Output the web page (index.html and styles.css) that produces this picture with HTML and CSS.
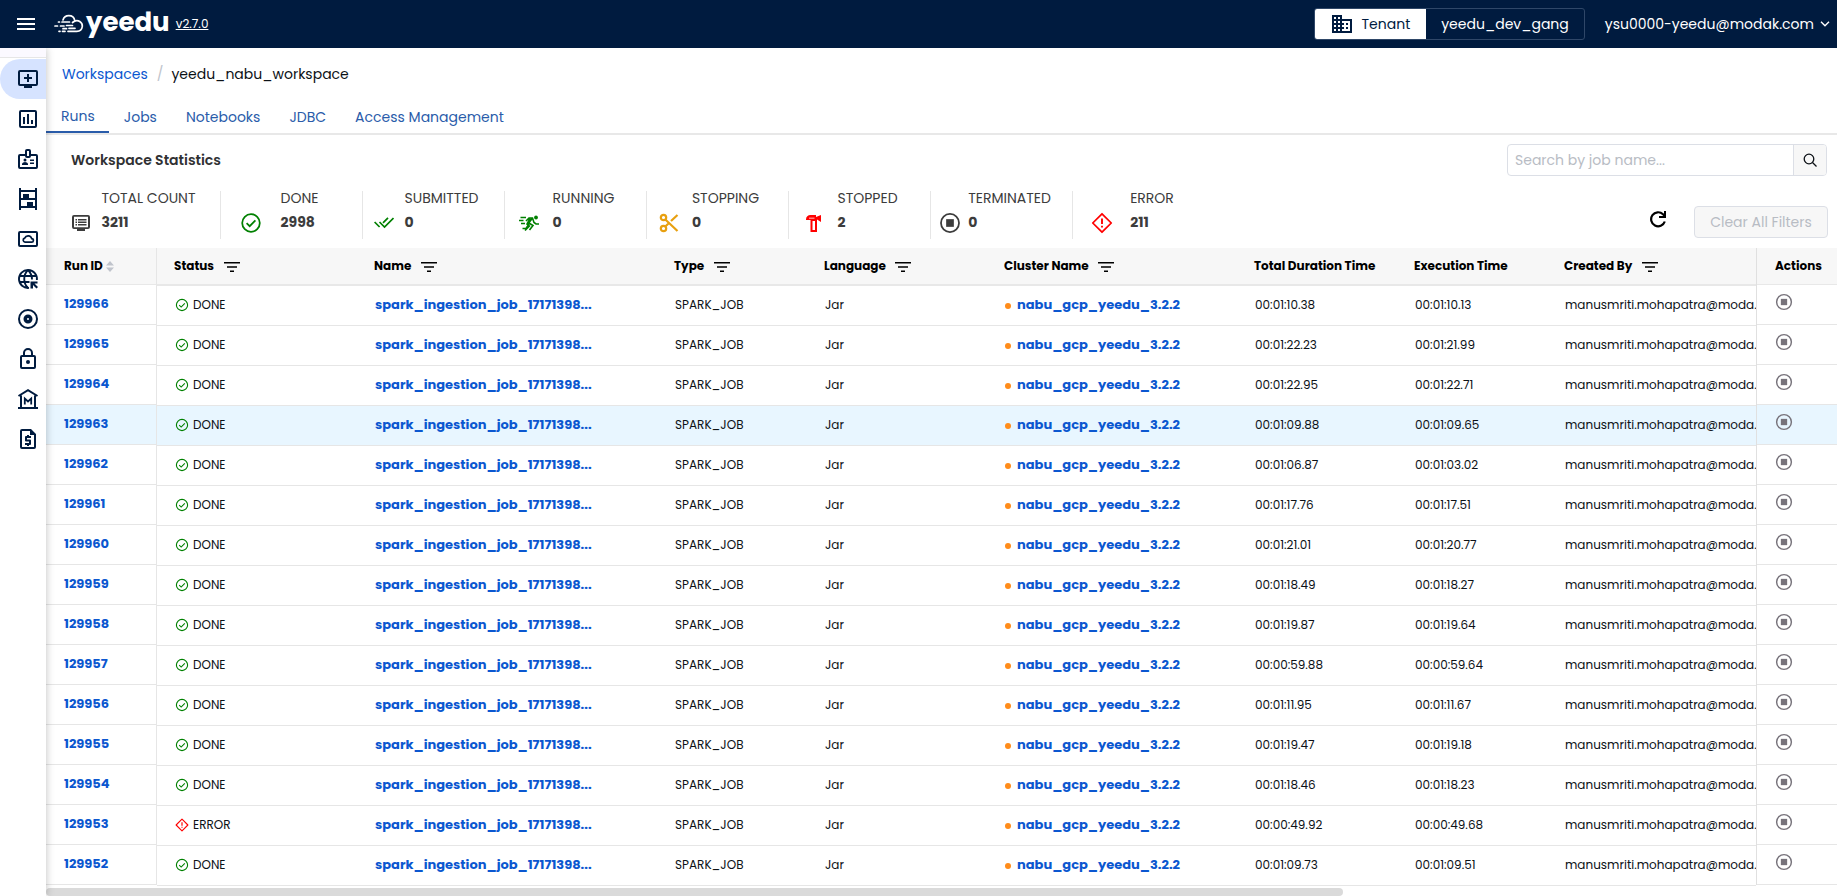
FILE: index.html
```html
<!DOCTYPE html>
<html lang="en">
  <head>
    <meta charset="UTF-8" />
    <meta name="viewport" content="width=device-width, initial-scale=1.0" />
    <title>Yeedu</title>
    <link rel="stylesheet" href="styles.css">
  </head>
  <body>
    <!-- shared icons -->
    <svg class="sprite" aria-hidden="true">
      <symbol id="i-filter" viewBox="0 0 16 12"><path d="M0 1h16v1.600H0zM3 5.200h10v1.600H3zM6 9.400h4V11H6z" /></symbol>
      <symbol id="i-check" viewBox="0 0 20 20"><circle cx="10" cy="10" r="8" fill="none" stroke="currentColor" stroke-width="1.6" /><path d="M6 10.2l2.8 2.7 5.2-5.3" fill="none" stroke="currentColor" stroke-width="1.6" /></symbol>
      <symbol id="i-error" viewBox="0 0 20 20"><path d="M10 1.6L18.4 10 10 18.4 1.6 10z" fill="none" stroke="currentColor" stroke-width="1.6" stroke-linejoin="round" /><path d="M10 6v5M10 12.4v1.7" fill="none" stroke="currentColor" stroke-width="1.7" /></symbol>
      <symbol id="i-stop" viewBox="0 0 20 20"><circle cx="10" cy="10" r="8.2" fill="none" stroke="currentColor" stroke-width="1.6" /><path d="M6.5 6.5h7v7h-7z" /></symbol>
    </svg>

    <header class="topbar">
      <button class="menu-btn" aria-label="Menu">
        <svg width="18" height="12" viewBox="0 0 18 12"><path d="M0 0h18v2H0zM0 5h18v2H0zM0 10h18v2H0z" /></svg>
      </button>
      <a class="logo" href="#">
        <svg width="31" height="20" viewBox="0 0 31 20" fill="none" stroke="currentColor" stroke-width="1.7" stroke-linecap="round">
          <path d="M9 6C9.800 3.300 12 1.700 14.800 1.700c3.200 0 5.500 2 6 5M18.500 8.500c2.500-2.200 5.300-2.300 7.300-1 1.800 1.200 2.700 3 2.500 5-.4 3-2.500 4.800-5.500 4.800H14" />
          <path d="M4.500 8h1M8 8h7.500M1 12h2.500M6.500 12h3.500M12.500 11.500h6M9 14.700h3.500M15 14.300h6M5 17.300h1M8.500 17.300h2.500" />
        </svg>
        <span>yeedu</span>
      </a>
      <a class="version" href="#">v2.7.0</a>
      <div class="tenant">
        <button class="tenant-label">
          <svg width="22" height="20" viewBox="0 0 22 20"><path fill-rule="evenodd" d="M1 1h10v4h10v14H1zM3 3v2h2V3zm4 0v2h2V3zM3 7v2h2V7zm4 0v2h2V7zm-4 4v2h2v-2zm4 0v2h2v-2zm-4 4v2h2v-2zm4 0v2h2v-2zm4-8v2h2v2h-2v2h2v2h-2v2h8V7zm4 2h2v2h-2zm0 4h2v2h-2z" /></svg>
          Tenant
        </button>
        <button class="tenant-name">yeedu_dev_gang</button>
      </div>
      <button class="user">
        ysu0000-yeedu@modak.com
        <svg width="10" height="6" viewBox="0 0 10 6"><path d="M1 .8l4 4 4-4" fill="none" stroke="currentColor" stroke-width="1.4" /></svg>
      </button>
    </header>

    <div class="layout">
      <nav class="sidebar">
        <a class="active" href="#" aria-label="Workspaces"><svg viewBox="0 0 24 24"><path fill-rule="evenodd" d="M4 3h16a2 2 0 0 1 2 2v12a2 2 0 0 1-2 2h-4v2H8v-2H4a2 2 0 0 1-2-2V5a2 2 0 0 1 2-2zm0 2v12h16V5zm7 2h2v3h3v2h-3v3h-2v-3H8v-2h3z" /></svg></a>
        <a href="#" aria-label="Dashboard"><svg viewBox="0 0 24 24"><path fill-rule="evenodd" d="M5 3h14a2 2 0 0 1 2 2v14a2 2 0 0 1-2 2H5a2 2 0 0 1-2-2V5a2 2 0 0 1 2-2zm0 2v14h14V5zm2 5h2v7H7zm4-3h2v10h-2zm4 6h2v4h-2z" /></svg></a>
        <a href="#" aria-label="Users"><svg viewBox="0 0 24 24"><path fill-rule="evenodd" d="M11 2h2a2 2 0 0 1 2 2v3h5a2 2 0 0 1 2 2v11a2 2 0 0 1-2 2H4a2 2 0 0 1-2-2V9a2 2 0 0 1 2-2h5V4a2 2 0 0 1 2-2zm0 2v5h2V4zM4 9v11h16V9h-5a2 2 0 0 1-2 2h-2a2 2 0 0 1-2-2zm2 9v-1c0-1.300 2-2 3-2s3 .7 3 2v1z" /><circle cx="9" cy="13" r="1.500" /><path d="M14 12.500h4V14h-4zM14 15.500h4V17h-4z" /></svg></a>
        <a href="#" aria-label="Clusters"><svg viewBox="0 0 24 24"><path fill-rule="evenodd" d="M3 1h2v2h14V1h2v22h-2v-2H5v2H3zm2 4v6h2V7h6v4h6V5zm0 8v6h6v-4h6v4h2v-6z" /></svg></a>
        <a href="#" aria-label="Cloud environments"><svg viewBox="0 0 24 24"><path fill-rule="evenodd" d="M4 4h16a2 2 0 0 1 2 2v12a2 2 0 0 1-2 2H4a2 2 0 0 1-2-2V6a2 2 0 0 1 2-2zm0 2v12h16V6z" /><path d="M9 15.200h6.500a1.800 1.800 0 0 0 .2-3.600 3.700 3.700 0 0 0-7-.5A2.100 2.100 0 0 0 9 15.200z" fill="none" stroke="currentColor" stroke-width="1.700" /></svg></a>
        <a href="#" aria-label="Networks"><svg viewBox="0 0 24 24"><path fill="none" stroke="currentColor" stroke-width="1.900" d="M13 20.900A9 9 0 1 1 20.900 13M12 3c-5 5-5 13 0 18M12 3c3 3 4 6 4 9.500M3.500 9h17M3.500 15h10" /><path d="M14.500 14.500h7v2h-3l3.500 3.500-1.500 1.500L17 18v3.500h-2.500z" /></svg></a>
        <a href="#" aria-label="Disks"><svg viewBox="0 0 24 24"><circle cx="12" cy="12" r="9" fill="none" stroke="currentColor" stroke-width="2" /><path fill-rule="evenodd" d="M12 7.500a4.500 4.500 0 1 1 0 9 4.500 4.500 0 0 1 0-9zm0 3.500a1 1 0 1 0 0 2 1 1 0 0 0 0-2z" /></svg></a>
        <a href="#" aria-label="Credentials"><svg viewBox="0 0 24 24"><path fill-rule="evenodd" d="M7 8V6a5 5 0 0 1 10 0v2h1a2 2 0 0 1 2 2v10a2 2 0 0 1-2 2H6a2 2 0 0 1-2-2V10a2 2 0 0 1 2-2zm2 0h6V6a3 3 0 0 0-6 0zm-3 2v10h12V10z" /><circle cx="12" cy="15" r="2" /></svg></a>
        <a href="#" aria-label="Metastore"><svg viewBox="0 0 24 24"><path d="M2 20h20v2H2z" /><path d="M2.500 9L12 3.200 21.500 9M5 8.500V21M19 8.500V21" fill="none" stroke="currentColor" stroke-width="2" /><path d="M8.800 17.500v-6l3.200 3 3.200-3v6" fill="none" stroke="currentColor" stroke-width="1.800" /></svg></a>
        <a href="#" aria-label="Billing"><svg viewBox="0 0 24 24"><path fill-rule="evenodd" d="M6 2h9l5 5v13a2 2 0 0 1-2 2H6a2 2 0 0 1-2-2V4a2 2 0 0 1 2-2zm0 2v16h12V8h-4V4zm5 4h2v1h2v2h-4v1.500h3a1 1 0 0 1 1 1V17a1 1 0 0 1-1 1h-1v1h-2v-1H9v-2h4v-1.500h-3a1 1 0 0 1-1-1V10a1 1 0 0 1 1-1h1z" /></svg></a>
      </nav>

      <main class="content">
        <nav class="breadcrumb">
          <a href="#">Workspaces</a>
          <span class="slash">/</span>
          <span>yeedu_nabu_workspace</span>
        </nav>
        <nav class="tabs">
          <a class="active" href="#">Runs</a>
          <a href="#">Jobs</a>
          <a href="#">Notebooks</a>
          <a href="#">JDBC</a>
          <a href="#">Access Management</a>
        </nav>

        <div class="title-row">
          <h1>Workspace Statistics</h1>
          <form class="search">
            <input type="text" placeholder="Search by job name..." aria-label="Search by job name">
            <button type="button" aria-label="Search">
              <svg width="14" height="14" viewBox="0 0 14 14" fill="none" stroke="currentColor" stroke-width="1.300"><circle cx="6" cy="6" r="4.800" /><path d="M9.500 9.500l4 4" /></svg>
            </button>
          </form>
        </div>

        <div class="stats-row">
          <div class="stats">
            <div class="stat first">
              <div class="stat-icon"><svg width="20" height="20" viewBox="0 0 20 20"><path fill-rule="evenodd" d="M3 2h14a2 2 0 0 1 2 2v10a2 2 0 0 1-2 2h-3v2H6v-2H3a2 2 0 0 1-2-2V4a2 2 0 0 1 2-2zm0 1.700v10.600h14V3.700zM4.500 6H6v1.500H4.500zM7 6h8.500v1.500H7zM4.500 8.500H6V10H4.500zM7 8.500h8.500V10H7zM4.500 11H6v1.500H4.500zM7 11h8.500v1.500H7z" /></svg></div>
              <div><div class="label">TOTAL COUNT</div><div class="value">3211</div></div>
            </div>
            <div class="stat">
              <div class="stat-icon green"><svg width="22" height="22"><use href="#i-check" /></svg></div>
              <div><div class="label">DONE</div><div class="value">2998</div></div>
            </div>
            <div class="stat">
              <div class="stat-icon green"><svg width="20" height="20" viewBox="0 0 20 20" fill="none" stroke="currentColor" stroke-width="1.700"><path d="M.6 9l5 5M5.500 9l5 5 9-9M9 9.800l5-5" /></svg></div>
              <div><div class="label">SUBMITTED</div><div class="value">0</div></div>
            </div>
            <div class="stat">
              <div class="stat-icon green"><svg width="20" height="20" viewBox="0 0 20 20"><circle cx="17" cy="4.500" r="1.900" /><path fill="none" stroke="currentColor" stroke-width="1.600" d="M1.500 4.500H7M0 7.500h4.500M2 10.500h4M7 8l3-3h3.500l1.500 4.500 2 1.500h3M13.500 5L9 11M9 9.500l5 3-3.500 4.500M3.500 15.500h3.500l3-4.500M6 17.500l5-5M11 5.500L8 11l2 2" /></svg></div>
              <div><div class="label">RUNNING</div><div class="value">0</div></div>
            </div>
            <div class="stat">
              <div class="stat-icon orange"><svg width="20" height="20" viewBox="0 0 20 20" fill="none" stroke="currentColor" stroke-width="2.200"><circle cx="4.500" cy="4.500" r="2.700" /><circle cx="4.500" cy="15.500" r="2.700" /><path d="M6.300 6.500L18.500 18M6.300 13.500l3.200-3M12 8l6.500-6" /></svg></div>
              <div><div class="label">STOPPING</div><div class="value">0</div></div>
            </div>
            <div class="stat">
              <div class="stat-icon red"><svg width="18" height="20" viewBox="0 0 18 20"><path fill-rule="evenodd" d="M2 6.500C2 3.500 4 2 6.500 2H12v2l5-2v7l-4-2.500V19H6.500V7H2zM8.500 8v9H11V8zM5 4.800h5.500v.8H5z" /></svg></div>
              <div><div class="label">STOPPED</div><div class="value">2</div></div>
            </div>
            <div class="stat">
              <div class="stat-icon"><svg width="22" height="22"><use href="#i-stop" /></svg></div>
              <div><div class="label">TERMINATED</div><div class="value">0</div></div>
            </div>
            <div class="stat">
              <div class="stat-icon red"><svg width="22" height="22"><use href="#i-error" /></svg></div>
              <div><div class="label">ERROR</div><div class="value">211</div></div>
            </div>
          </div>
          <button class="refresh" aria-label="Refresh">
            <svg width="18" height="18" viewBox="0 0 18 18"><path d="M15.800 11.500A7 7 0 1 1 14 4.200l1.500 1.500" fill="none" stroke="currentColor" stroke-width="2.200" /><path d="M17 1v7h-7V6h5V1z" /></svg>
          </button>
          <button class="clear" disabled>Clear All Filters</button>
        </div>

        <div class="grid">
          <table class="pane pane-left">
            <thead>
              <tr><th>Run ID <svg class="sort" width="8" height="11" viewBox="0 0 8 11"><path d="M4 0l4 4.500H0zM4 11L0 6.500h8z" /></svg></th></tr>
            </thead>
            <tbody id="ids"></tbody>
          </table>
          <div class="pane-middle">
            <table class="pane">
              <colgroup>
                <col class="w-200"><col class="w-300"><col class="w-150"><col class="w-180"><col class="w-250"><col class="w-160"><col class="w-150"><col class="w-300">
              </colgroup>
              <thead>
                <tr>
                  <th>Status <svg class="filter"><use href="#i-filter" /></svg></th>
                  <th>Name <svg class="filter"><use href="#i-filter" /></svg></th>
                  <th>Type <svg class="filter"><use href="#i-filter" /></svg></th>
                  <th>Language <svg class="filter"><use href="#i-filter" /></svg></th>
                  <th>Cluster Name <svg class="filter"><use href="#i-filter" /></svg></th>
                  <th>Total Duration Time</th>
                  <th>Execution Time</th>
                  <th>Created By <svg class="filter"><use href="#i-filter" /></svg></th>
                </tr>
              </thead>
              <tbody id="runs"></tbody>
            </table>
          </div>
          <table class="pane pane-right">
            <thead>
              <tr><th>Actions</th></tr>
            </thead>
            <tbody id="actions"></tbody>
          </table>
        </div>
        <div class="scrollbar"><div class="thumb"></div></div>
      </main>
    </div>

    <script>
        const runs = [
          [129966, "DONE", "00:01:10.38", "00:01:10.13"],
          [129965, "DONE", "00:01:22.23", "00:01:21.99"],
          [129964, "DONE", "00:01:22.95", "00:01:22.71"],
          [129963, "DONE", "00:01:09.88", "00:01:09.65"],
          [129962, "DONE", "00:01:06.87", "00:01:03.02"],
          [129961, "DONE", "00:01:17.76", "00:01:17.51"],
          [129960, "DONE", "00:01:21.01", "00:01:20.77"],
          [129959, "DONE", "00:01:18.49", "00:01:18.27"],
          [129958, "DONE", "00:01:19.87", "00:01:19.64"],
          [129957, "DONE", "00:00:59.88", "00:00:59.64"],
          [129956, "DONE", "00:01:11.95", "00:01:11.67"],
          [129955, "DONE", "00:01:19.47", "00:01:19.18"],
          [129954, "DONE", "00:01:18.46", "00:01:18.23"],
          [129953, "ERROR", "00:00:49.92", "00:00:49.68"],
          [129952, "DONE", "00:01:09.73", "00:01:09.51"],
        ];
        const selected = 129963;

        let ids = "";
        let rows = "";
        let actions = "";

        runs.forEach(([id, status, total, execution]) => {
          const cls = id === selected ? "selected" : "";
          const icon = status === "DONE" ? "check" : "error";

          ids += `<tr class="${cls}"><td><a href="#">${id}</a></td></tr>`;
          rows += `<tr class="${cls}">
            <td><span class="status"><svg class="${icon}"><use href="#i-${icon}" /></svg>${status}</span></td>
            <td><a href="#">spark_ingestion_job_17171398...</a></td>
            <td>SPARK_JOB</td>
            <td>Jar</td>
            <td><span class="dot"></span><a href="#">nabu_gcp_yeedu_3.2.2</a></td>
            <td>${total}</td>
            <td>${execution}</td>
            <td>manusmriti.mohapatra@moda.</td>
          </tr>`;
          actions += `<tr class="${cls}"><td><button aria-label="Stop run ${id}"><svg width="18" height="18"><use href="#i-stop" /></svg></button></td></tr>`;
        });

        document.querySelector("#ids").innerHTML = ids;
        document.querySelector("#runs").innerHTML = rows;
        document.querySelector("#actions").innerHTML = actions;
    </script>
  </body>
</html>
```
FILE: styles.css
```css
* {
    box-sizing: border-box;
}

body {
    margin: 0;
    height: 100vh;
    display: flex;
    flex-direction: column;
    overflow: hidden;
    background: #fff;
    color: #0c1116;
    font-family: Poppins, Inter, sans-serif;
    font-size: 14px;
}

a {
    color: #0b57d0;
    text-decoration: none;
}

button,
input {
    font: inherit;
    color: inherit;
    border: none;
    background: none;
    padding: 0;
    margin: 0;
}

button {
    cursor: pointer;
}

svg {
    display: block;
    flex: none;
    fill: currentColor;
}

svg[fill="none"] {
    fill: none;
}

.sprite {
    position: absolute;
    width: 0;
    height: 0;
}

/* top bar */
.topbar {
    height: 48px;
    flex: none;
    display: flex;
    align-items: center;
    padding: 0 7px 0 17px;
    background: #001b3f;
    color: #fff;
}

.logo {
    display: flex;
    align-items: center;
    margin-left: 19px;
    color: #fff;
    font-size: 26px;
    font-weight: 700;
    line-height: 32px;
}

.logo span {
    margin: 0 6px 4px 1px;
}

.version {
    color: #fff;
    font-size: 12px;
    text-decoration: underline;
}

.tenant {
    display: flex;
    height: 32px;
    margin-left: auto;
    border: 1px solid #2f4768;
    border-radius: 3px;
    overflow: hidden;
}

.tenant-label {
    display: flex;
    align-items: center;
    gap: 9px;
    padding: 0 16px;
    background: #fff;
    color: #001b3f;
}

.tenant-name {
    padding: 0 15px;
}

.user {
    display: flex;
    align-items: center;
    gap: 6px;
    margin-left: 20px;
}

.layout {
    flex: 1;
    min-height: 0;
    display: flex;
}

/* side menu */
.sidebar {
    position: relative;
    width: 46px;
    flex: none;
    padding-top: 11px;
    background: linear-gradient(#fbf9ff 9px, #e6e6e6 9px, #e6e6e6 10px, #fff 10px);
    box-shadow: 0 0 8px rgba(0, 0, 0, 0.25);
    clip-path: inset(0 -10px 0 0);
}

.sidebar a {
    display: flex;
    align-items: center;
    height: 40px;
    padding-left: 16px;
    color: #001b3f;
}

.sidebar a.active {
    background: #d6e3ff;
    border-radius: 20px 0 0 20px;
}

.sidebar svg {
    width: 24px;
    height: 24px;
}

.content {
    flex: 1;
    min-width: 0;
    display: flex;
    flex-direction: column;
}

.breadcrumb {
    display: flex;
    align-items: center;
    height: 52px;
    padding-left: 16px;
}

.slash {
    margin: 0 8px 0 9px;
    color: #c0c4cc;
}

.tabs {
    display: flex;
    height: 35px;
    border-bottom: 2px solid #e8e8e8;
}

.tabs a {
    padding: 0 14px 0 15px;
    line-height: 35px;
    color: #2a5caa;
}

.tabs a.active {
    line-height: 33px;
    border-bottom: 2px solid #2a5caa;
}

.title-row {
    display: flex;
    align-items: center;
    justify-content: space-between;
    height: 50px;
    padding: 0 10px 0 25px;
}

.title-row h1 {
    margin: 0;
    color: #303133;
    font-size: 14px;
    font-weight: 600;
}

.search {
    display: flex;
    width: 320px;
    height: 32px;
    border: 1px solid #dcdfe6;
    border-radius: 4px;
    overflow: hidden;
}

.search input {
    flex: 1;
    min-width: 0;
    padding: 0 7px;
}

.search input::placeholder {
    color: #b8bcc4;
    opacity: 1;
}

.search button {
    display: grid;
    place-items: center;
    width: 33px;
    background: #f7f7f7;
    border-left: 1px solid #dcdfe6;
}

.stats-row {
    display: flex;
    align-items: center;
    height: 63px;
    padding: 0 9px 3px 15px;
}

.stats {
    display: flex;
    margin-right: auto;
    color: #3c3c3c;
}

.stat {
    display: flex;
    width: 142px;
    height: 48px;
    border-right: 1px solid #e6e6e6;
}

.stat.first {
    width: 160px;
}

.stat:last-child {
    border-right: none;
}

.stat-icon {
    flex: 1 1 16px;
    display: grid;
    place-items: center;
    padding-top: 16px;
}

.stat::after {
    content: "";
    flex: 1 1 0;
}

.label {
    line-height: 14px;
}

.value {
    font-weight: 700;
    line-height: 34px;
}

.green {
    color: #008000;
}

.orange {
    color: #e8a010;
}

.red {
    color: #ff0000;
}

.refresh {
    margin: 8px 27px 0 0;
    color: #000;
}

.clear {
    width: 134px;
    height: 32px;
    margin-top: 14px;
    border: 1px solid #dcdfe6;
    border-radius: 4px;
    background: #f7f7f7;
    color: #b8bcc4;
}

/* runs table, first and last columns stay frozen */
.grid {
    flex: 1;
    min-height: 0;
    display: flex;
    overflow: hidden;
}

.pane {
    border-collapse: separate;
    border-spacing: 0;
    table-layout: fixed;
    width: 1690px;
    font-size: 12px;
}

.pane-middle {
    flex: 1;
    min-width: 0;
    overflow: hidden;
}

.pane-left,
.pane-right {
    flex: none;
    align-self: flex-start;
}

.pane-left {
    width: 111px;
    border-right: 1px solid #e6e6e6;
}

.pane-right {
    width: 81px;
    border-left: 1px solid #e0e0e0;
}

.pane th {
    height: 38px;
    padding: 0 17px;
    background: #f7f7f7;
    border-bottom: 2px solid #e8e8e8;
    color: #000;
    font-weight: 700;
    text-align: left;
    white-space: nowrap;
}

.pane td {
    height: 40px;
    padding: 0 18px 1px;
    border-bottom: 1px solid #e6e6e6;
    white-space: nowrap;
}

.pane td a {
    font-size: 13px;
    font-weight: 700;
}

.pane-left th,
.pane-right th {
    height: 37px;
    padding: 0 18px;
    border-bottom-width: 1px;
}

.pane-right td {
    padding-bottom: 5px;
}

.pane .selected td {
    background: #e8f6ff;
}

.sort,
.filter {
    display: inline-block;
    vertical-align: middle;
}

.sort {
    margin-left: 1px;
    color: #c0c4cc;
}

.filter {
    width: 16px;
    height: 12px;
    margin-left: 7px;
}

.w-150 { width: 150px; }
.w-160 { width: 160px; }
.w-180 { width: 180px; }
.w-200 { width: 200px; }
.w-250 { width: 250px; }
.w-300 { width: 300px; }

.status {
    display: flex;
    align-items: center;
    gap: 4px;
}

.status svg {
    width: 14px;
    height: 14px;
}

.check {
    color: #008000;
}

.error {
    color: #ff0000;
}

.dot {
    display: inline-block;
    width: 6px;
    height: 6px;
    margin-right: 6px;
    border-radius: 50%;
    background: #ff8c1a;
    vertical-align: middle;
}

.pane-right button {
    display: block;
    color: #77737b;
}

.scrollbar {
    height: 8px;
    flex: none;
}

.thumb {
    width: 72.4%;
    height: 8px;
    border-radius: 4px;
    background: #dadada;
}
```
